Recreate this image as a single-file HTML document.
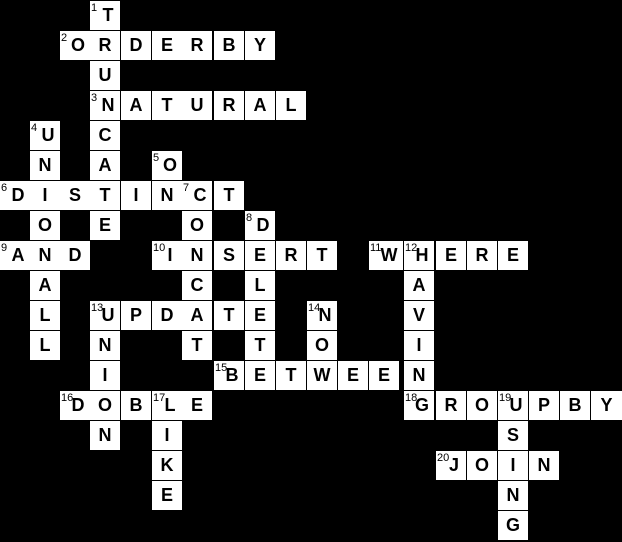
<!DOCTYPE html>
<html><head><meta charset="utf-8"><style>
body{margin:0;background:#000;width:622px;height:542px;overflow:hidden;position:relative;font-family:"Liberation Sans",Arial,sans-serif}
.c{position:absolute;width:30px;height:29px;background:#fff;color:#000;font-weight:bold;font-size:18px;line-height:29px;text-align:center;box-sizing:border-box}
.c i{position:absolute;left:1px;top:2px;font-style:normal;font-weight:normal;font-size:11px;line-height:11px}
.n{padding-left:6px}
</style></head><body>
<div class="c n" style="left:90px;top:1px"><i>1</i>T</div>
<div class="c n" style="left:60px;top:31px"><i>2</i>O</div>
<div class="c" style="left:90px;top:31px">R</div>
<div class="c" style="left:121px;top:31px">D</div>
<div class="c" style="left:152px;top:31px">E</div>
<div class="c" style="left:182px;top:31px">R</div>
<div class="c" style="left:214px;top:31px">B</div>
<div class="c" style="left:245px;top:31px">Y</div>
<div class="c" style="left:90px;top:61px">U</div>
<div class="c n" style="left:90px;top:91px"><i>3</i>N</div>
<div class="c" style="left:121px;top:91px">A</div>
<div class="c" style="left:152px;top:91px">T</div>
<div class="c" style="left:182px;top:91px">U</div>
<div class="c" style="left:214px;top:91px">R</div>
<div class="c" style="left:245px;top:91px">A</div>
<div class="c" style="left:276px;top:91px">L</div>
<div class="c n" style="left:30px;top:121px"><i>4</i>U</div>
<div class="c" style="left:90px;top:121px">C</div>
<div class="c" style="left:30px;top:151px">N</div>
<div class="c" style="left:90px;top:151px">A</div>
<div class="c n" style="left:152px;top:151px"><i>5</i>O</div>
<div class="c n" style="left:0px;top:181px"><i>6</i>D</div>
<div class="c" style="left:30px;top:181px">I</div>
<div class="c" style="left:60px;top:181px">S</div>
<div class="c" style="left:90px;top:181px">T</div>
<div class="c" style="left:121px;top:181px">I</div>
<div class="c" style="left:152px;top:181px">N</div>
<div class="c n" style="left:182px;top:181px"><i>7</i>C</div>
<div class="c" style="left:214px;top:181px">T</div>
<div class="c" style="left:30px;top:211px">O</div>
<div class="c" style="left:90px;top:211px">E</div>
<div class="c" style="left:182px;top:211px">O</div>
<div class="c n" style="left:245px;top:211px"><i>8</i>D</div>
<div class="c n" style="left:0px;top:241px"><i>9</i>A</div>
<div class="c" style="left:30px;top:241px">N</div>
<div class="c" style="left:60px;top:241px">D</div>
<div class="c n" style="left:152px;top:241px"><i>10</i>I</div>
<div class="c" style="left:182px;top:241px">N</div>
<div class="c" style="left:214px;top:241px">S</div>
<div class="c" style="left:245px;top:241px">E</div>
<div class="c" style="left:276px;top:241px">R</div>
<div class="c" style="left:307px;top:241px">T</div>
<div class="c n" style="left:369px;top:241px;width:34px"><i>11</i>W</div>
<div class="c n" style="left:404px;top:241px"><i>12</i>H</div>
<div class="c" style="left:436px;top:241px">E</div>
<div class="c" style="left:467px;top:241px">R</div>
<div class="c" style="left:498px;top:241px">E</div>
<div class="c" style="left:30px;top:271px">A</div>
<div class="c" style="left:182px;top:271px">C</div>
<div class="c" style="left:245px;top:271px">L</div>
<div class="c" style="left:404px;top:271px">A</div>
<div class="c" style="left:30px;top:301px">L</div>
<div class="c n" style="left:90px;top:301px"><i>13</i>U</div>
<div class="c" style="left:121px;top:301px">P</div>
<div class="c" style="left:152px;top:301px">D</div>
<div class="c" style="left:182px;top:301px">A</div>
<div class="c" style="left:214px;top:301px">T</div>
<div class="c" style="left:245px;top:301px">E</div>
<div class="c n" style="left:307px;top:301px"><i>14</i>N</div>
<div class="c" style="left:404px;top:301px">V</div>
<div class="c" style="left:30px;top:331px">L</div>
<div class="c" style="left:90px;top:331px">N</div>
<div class="c" style="left:182px;top:331px">T</div>
<div class="c" style="left:245px;top:331px">T</div>
<div class="c" style="left:307px;top:331px">O</div>
<div class="c" style="left:404px;top:331px">I</div>
<div class="c" style="left:90px;top:361px">I</div>
<div class="c n" style="left:214px;top:361px"><i>15</i>B</div>
<div class="c" style="left:245px;top:361px">E</div>
<div class="c" style="left:276px;top:361px">T</div>
<div class="c" style="left:307px;top:361px">W</div>
<div class="c" style="left:338px;top:361px">E</div>
<div class="c" style="left:369px;top:361px">E</div>
<div class="c" style="left:404px;top:361px">N</div>
<div class="c n" style="left:60px;top:391px"><i>16</i>D</div>
<div class="c" style="left:90px;top:391px">O</div>
<div class="c" style="left:121px;top:391px">B</div>
<div class="c n" style="left:152px;top:391px"><i>17</i>L</div>
<div class="c" style="left:182px;top:391px">E</div>
<div class="c n" style="left:404px;top:391px"><i>18</i>G</div>
<div class="c" style="left:436px;top:391px">R</div>
<div class="c" style="left:467px;top:391px">O</div>
<div class="c n" style="left:498px;top:391px"><i>19</i>U</div>
<div class="c" style="left:529px;top:391px">P</div>
<div class="c" style="left:560px;top:391px">B</div>
<div class="c" style="left:591px;top:391px;width:31px">Y</div>
<div class="c" style="left:90px;top:421px">N</div>
<div class="c" style="left:152px;top:421px">I</div>
<div class="c" style="left:498px;top:421px">S</div>
<div class="c" style="left:152px;top:451px">K</div>
<div class="c n" style="left:436px;top:451px"><i>20</i>J</div>
<div class="c" style="left:467px;top:451px">O</div>
<div class="c" style="left:498px;top:451px">I</div>
<div class="c" style="left:529px;top:451px">N</div>
<div class="c" style="left:152px;top:481px">E</div>
<div class="c" style="left:498px;top:481px">N</div>
<div class="c" style="left:498px;top:511px">G</div>
</body></html>
